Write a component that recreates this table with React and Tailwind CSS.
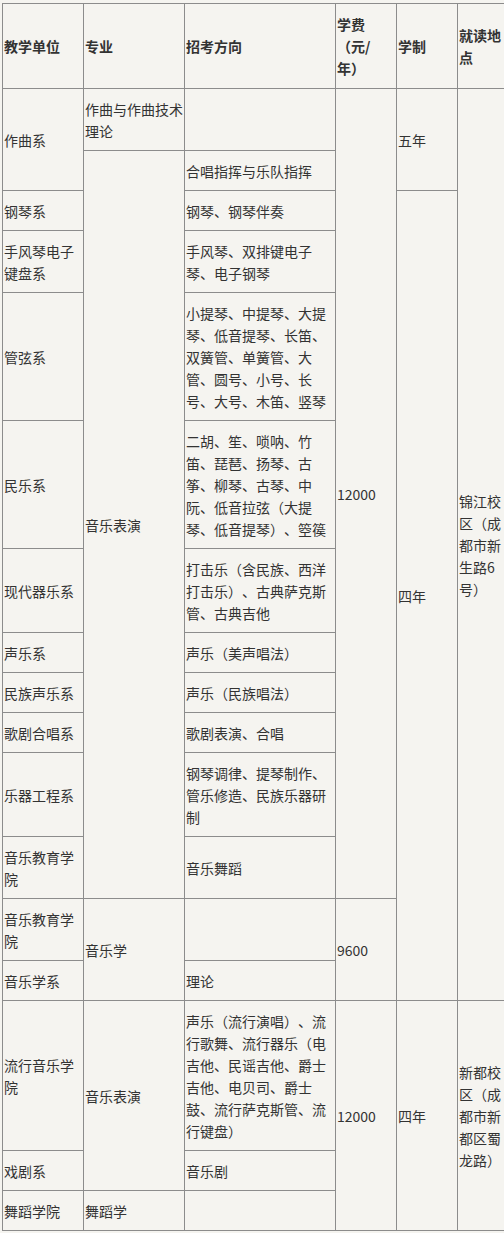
const cell = "border border-[#8c8c8c] pl-[1px] pr-0 pt-[9px] pb-[8px] align-middle";
const th = "border border-[#8c8c8c] pl-[1px] pr-0 pt-[9px] pb-[9px] align-middle text-left font-bold";

export default function App() {
  return (
    <div className="h-[1233px] w-[504px] overflow-hidden bg-[#f5f4f0] pt-[3px] pl-[2px] text-[14px] leading-[22px] text-[#333333] [text-spacing-trim:space-all] [font-family:'Noto_Sans_CJK_SC','Noto_Sans',sans-serif]">
      <table className="w-[504px] table-fixed border-collapse">
        <colgroup>
          <col className="w-[81px]" />
          <col className="w-[101px]" />
          <col className="w-[151px]" />
          <col className="w-[61px]" />
          <col className="w-[61px]" />
          <col className="w-[49px]" />
        </colgroup>
        <thead>
          <tr>
            <th className={th}>教学单位</th>
            <th className={th}>专业</th>
            <th className={th}>招考方向</th>
            <th className={th}>
              学费
              <br />
              （元/
              <br />
              年）
            </th>
            <th className={th}>学制</th>
            <th className={th}>就读地点</th>
          </tr>
        </thead>
        <tbody>
          <tr>
            <td className={cell} rowSpan={2}>作曲系</td>
            <td className={cell}>作曲与作曲技术理论</td>
            <td className={cell}></td>
            <td className={cell} rowSpan={12}>12000</td>
            <td className={cell} rowSpan={2}>五年</td>
            <td className={cell} rowSpan={14}>锦江校区（成都市新生路6号）</td>
          </tr>
          <tr>
            <td className={cell} rowSpan={11}>音乐表演</td>
            <td className={cell}>合唱指挥与乐队指挥</td>
          </tr>
          <tr>
            <td className={cell}>钢琴系</td>
            <td className={cell}>钢琴、钢琴伴奏</td>
            <td className={cell} rowSpan={12}>四年</td>
          </tr>
          <tr>
            <td className={cell}>手风琴电子键盘系</td>
            <td className={cell}>手风琴、双排键电子琴、电子钢琴</td>
          </tr>
          <tr>
            <td className={cell}>管弦系</td>
            <td className={cell}>小提琴、中提琴、大提琴、低音提琴、长笛、双簧管、单簧管、大管、圆号、小号、长号、大号、木笛、竖琴</td>
          </tr>
          <tr>
            <td className={cell}>民乐系</td>
            <td className={cell}>二胡、笙、唢呐、竹笛、琵琶、扬琴、古筝、柳琴、古琴、中阮、低音拉弦（大提琴、低音提琴）、箜篌</td>
          </tr>
          <tr>
            <td className={cell}>现代器乐系</td>
            <td className={cell}>打击乐（含民族、西洋打击乐）、古典萨克斯管、古典吉他</td>
          </tr>
          <tr>
            <td className={cell}>声乐系</td>
            <td className={cell}>声乐（美声唱法）</td>
          </tr>
          <tr>
            <td className={cell}>民族声乐系</td>
            <td className={cell}>声乐（民族唱法）</td>
          </tr>
          <tr>
            <td className={cell}>歌剧合唱系</td>
            <td className={cell}>歌剧表演、合唱</td>
          </tr>
          <tr>
            <td className={cell}>乐器工程系</td>
            <td className={cell}>钢琴调律、提琴制作、管乐修造、民族乐器研制</td>
          </tr>
          <tr>
            <td className={cell}>音乐教育学院</td>
            <td className={cell}>音乐舞蹈</td>
          </tr>
          <tr>
            <td className={cell}>音乐教育学院</td>
            <td className={cell} rowSpan={2}>音乐学</td>
            <td className={cell}></td>
            <td className={cell} rowSpan={2}>9600</td>
          </tr>
          <tr>
            <td className={cell}>音乐学系</td>
            <td className={cell}>理论</td>
          </tr>
          <tr>
            <td className={cell}>流行音乐学院</td>
            <td className={cell} rowSpan={2}>音乐表演</td>
            <td className={cell}>声乐（流行演唱）、流行歌舞、流行器乐（电吉他、民谣吉他、爵士吉他、电贝司、爵士鼓、流行萨克斯管、流行键盘）</td>
            <td className={cell} rowSpan={3}>12000</td>
            <td className={cell} rowSpan={3}>四年</td>
            <td className={cell} rowSpan={3}>新都校区（成都市新都区蜀龙路）</td>
          </tr>
          <tr>
            <td className={cell}>戏剧系</td>
            <td className={cell}>音乐剧</td>
          </tr>
          <tr>
            <td className={cell}>舞蹈学院</td>
            <td className={cell}>舞蹈学</td>
            <td className={cell}></td>
          </tr>
        </tbody>
      </table>
    </div>
  );
}
